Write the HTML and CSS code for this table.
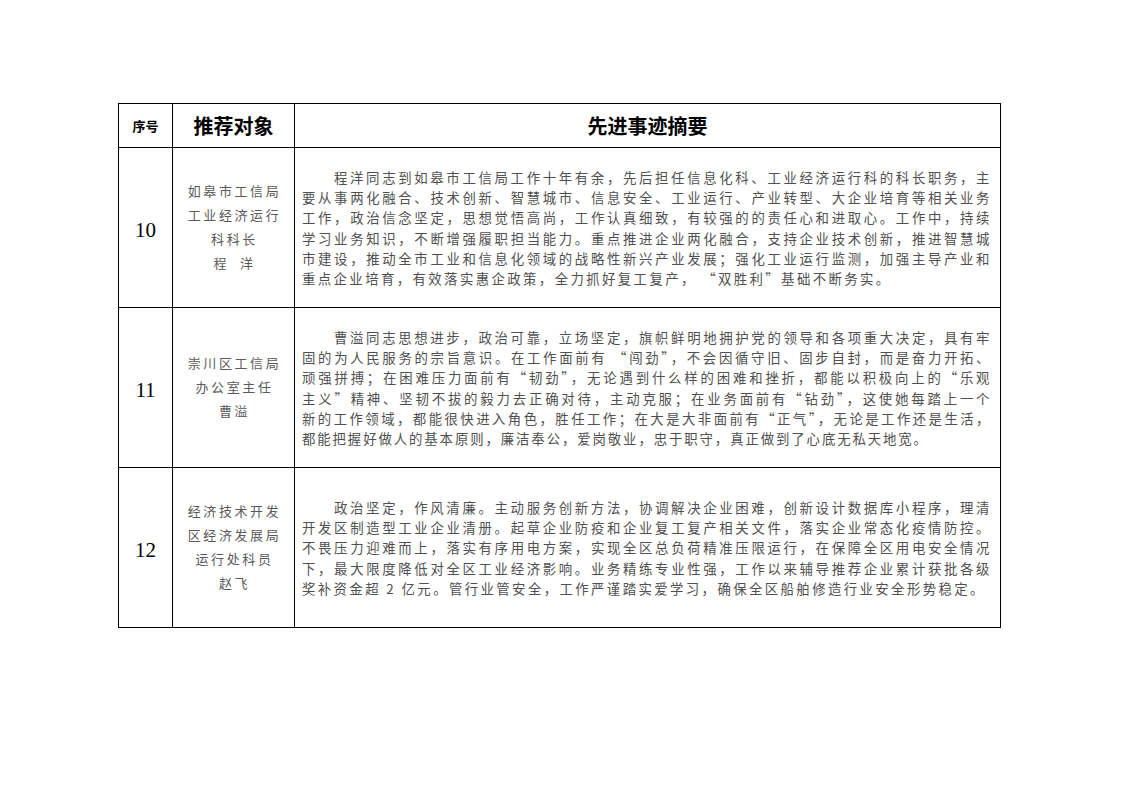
FILE: index.html
```html
<!DOCTYPE html>
<html lang="zh-CN">
<head>
<meta charset="utf-8">
<title>先进事迹摘要</title>
<link rel="stylesheet" href="styles.css">
</head>
<body>
<div class="page">
<table class="tbl">
<colgroup><col class="c1"><col class="c2"><col class="c3"></colgroup>
<tr class="head">
<th class="h-no">序号</th>
<th class="h-big">推荐对象</th>
<th class="h-big">先进事迹摘要</th>
</tr>
<tr class="row">
<td class="num">10</td>
<td class="who"><div>如皋市工信局</div><div>工业经济运行</div><div>科科长</div><div>程&nbsp;&nbsp;洋</div></td>
<td class="desc">
<div class="ln ind">程洋同志到如皋市工信局工作十年有余，先后担任信息化科、工业经济运行科的科长职务，主</div>
<div class="ln">要从事两化融合、技术创新、智慧城市、信息安全、工业运行、产业转型、大企业培育等相关业务</div>
<div class="ln">工作，政治信念坚定，思想觉悟高尚，工作认真细致，有较强的的责任心和进取心。工作中，持续</div>
<div class="ln">学习业务知识，不断增强履职担当能力。重点推进企业两化融合，支持企业技术创新，推进智慧城</div>
<div class="ln">市建设，推动全市工业和信息化领域的战略性新兴产业发展；强化工业运行监测，加强主导产业和</div>
<div class="ln last wide">重点企业培育，有效落实惠企政策，全力抓好复工复产， “双胜利”基础不断务实。</div>
</td>
</tr>
<tr class="row">
<td class="num">11</td>
<td class="who"><div>崇川区工信局</div><div>办公室主任</div><div>曹溢</div></td>
<td class="desc">
<div class="ln ind">曹溢同志思想进步，政治可靠，立场坚定，旗帜鲜明地拥护党的领导和各项重大决定，具有牢</div>
<div class="ln">固的为人民服务的宗旨意识。在工作面前有 “闯劲”，不会因循守旧、固步自封，而是奋力开拓、</div>
<div class="ln">顽强拼搏；在困难压力面前有“韧劲”，无论遇到什么样的困难和挫折，都能以积极向上的“乐观</div>
<div class="ln">主义”精神、坚韧不拔的毅力去正确对待，主动克服；在业务面前有“钻劲”，这使她每踏上一个</div>
<div class="ln">新的工作领域，都能很快进入角色，胜任工作；在大是大非面前有“正气”，无论是工作还是生活，</div>
<div class="ln last">都能把握好做人的基本原则，廉洁奉公，爱岗敬业，忠于职守，真正做到了心底无私天地宽。</div>
</td>
</tr>
<tr class="row">
<td class="num">12</td>
<td class="who"><div>经济技术开发</div><div>区经济发展局</div><div>运行处科员</div><div>赵飞</div></td>
<td class="desc">
<div class="ln ind">政治坚定，作风清廉。主动服务创新方法，协调解决企业困难，创新设计数据库小程序，理清</div>
<div class="ln">开发区制造型工业企业清册。起草企业防疫和企业复工复产相关文件，落实企业常态化疫情防控。</div>
<div class="ln">不畏压力迎难而上，落实有序用电方案，实现全区总负荷精准压限运行，在保障全区用电安全情况</div>
<div class="ln">下，最大限度降低对全区工业经济影响。业务精练专业性强，工作以来辅导推荐企业累计获批各级</div>
<div class="ln last wide">奖补资金超 2 亿元。管行业管安全，工作严谨踏实爱学习，确保全区船舶修造行业安全形势稳定。</div>
</td>
</tr>
</table>
</div>
</body>
</html>
```
FILE: styles.css
```css
html, body {
  margin: 0;
  padding: 0;
  background: #fff;
}
.page {
  padding: 103px 0 0 118px;
  font-family: "Noto Sans CJK SC", "Noto Sans", sans-serif;
}
.tbl {
  border-collapse: collapse;
  table-layout: fixed;
  width: 882px;
}
.c1 { width: 54px; }
.c2 { width: 122px; }
.c3 { width: 706px; }
.tbl th, .tbl td {
  border: 1px solid #000;
  padding: 0;
  vertical-align: middle;
}
.head th {
  height: 43px;
  color: #000;
  font-weight: 700;
  text-align: center;
}
.h-no {
  font-size: 13px;
}
.h-big {
  font-size: 20px;
}
.row td {
  height: 159px;
}
.row td.num {
  height: 154px;
  padding-top: 5px;
  text-align: center;
  font-family: "Liberation Serif", "Times New Roman", serif;
  font-size: 21px;
  color: #000;
}
.row td.who {
  height: 157px;
  padding: 0 0 2px 2px;
  text-align: center;
  font-size: 13px;
  letter-spacing: 2.6px;
  line-height: 24px;
  color: #5a5a5a;
}
.row td.desc {
  padding: 0 9px 0 7px;
  font-size: 13.4px;
  line-height: 20.2px;
  color: #505050;
  letter-spacing: 1.5px;
}
.ln {
  text-align: justify;
  text-align-last: justify;
  white-space: nowrap;
}
.ln.ind {
  padding-left: 32px;
}
.ln.last {
  text-align-last: left;
  letter-spacing: 1.9px;
}
.ln.last.wide {
  letter-spacing: 2.4px;
}
```
